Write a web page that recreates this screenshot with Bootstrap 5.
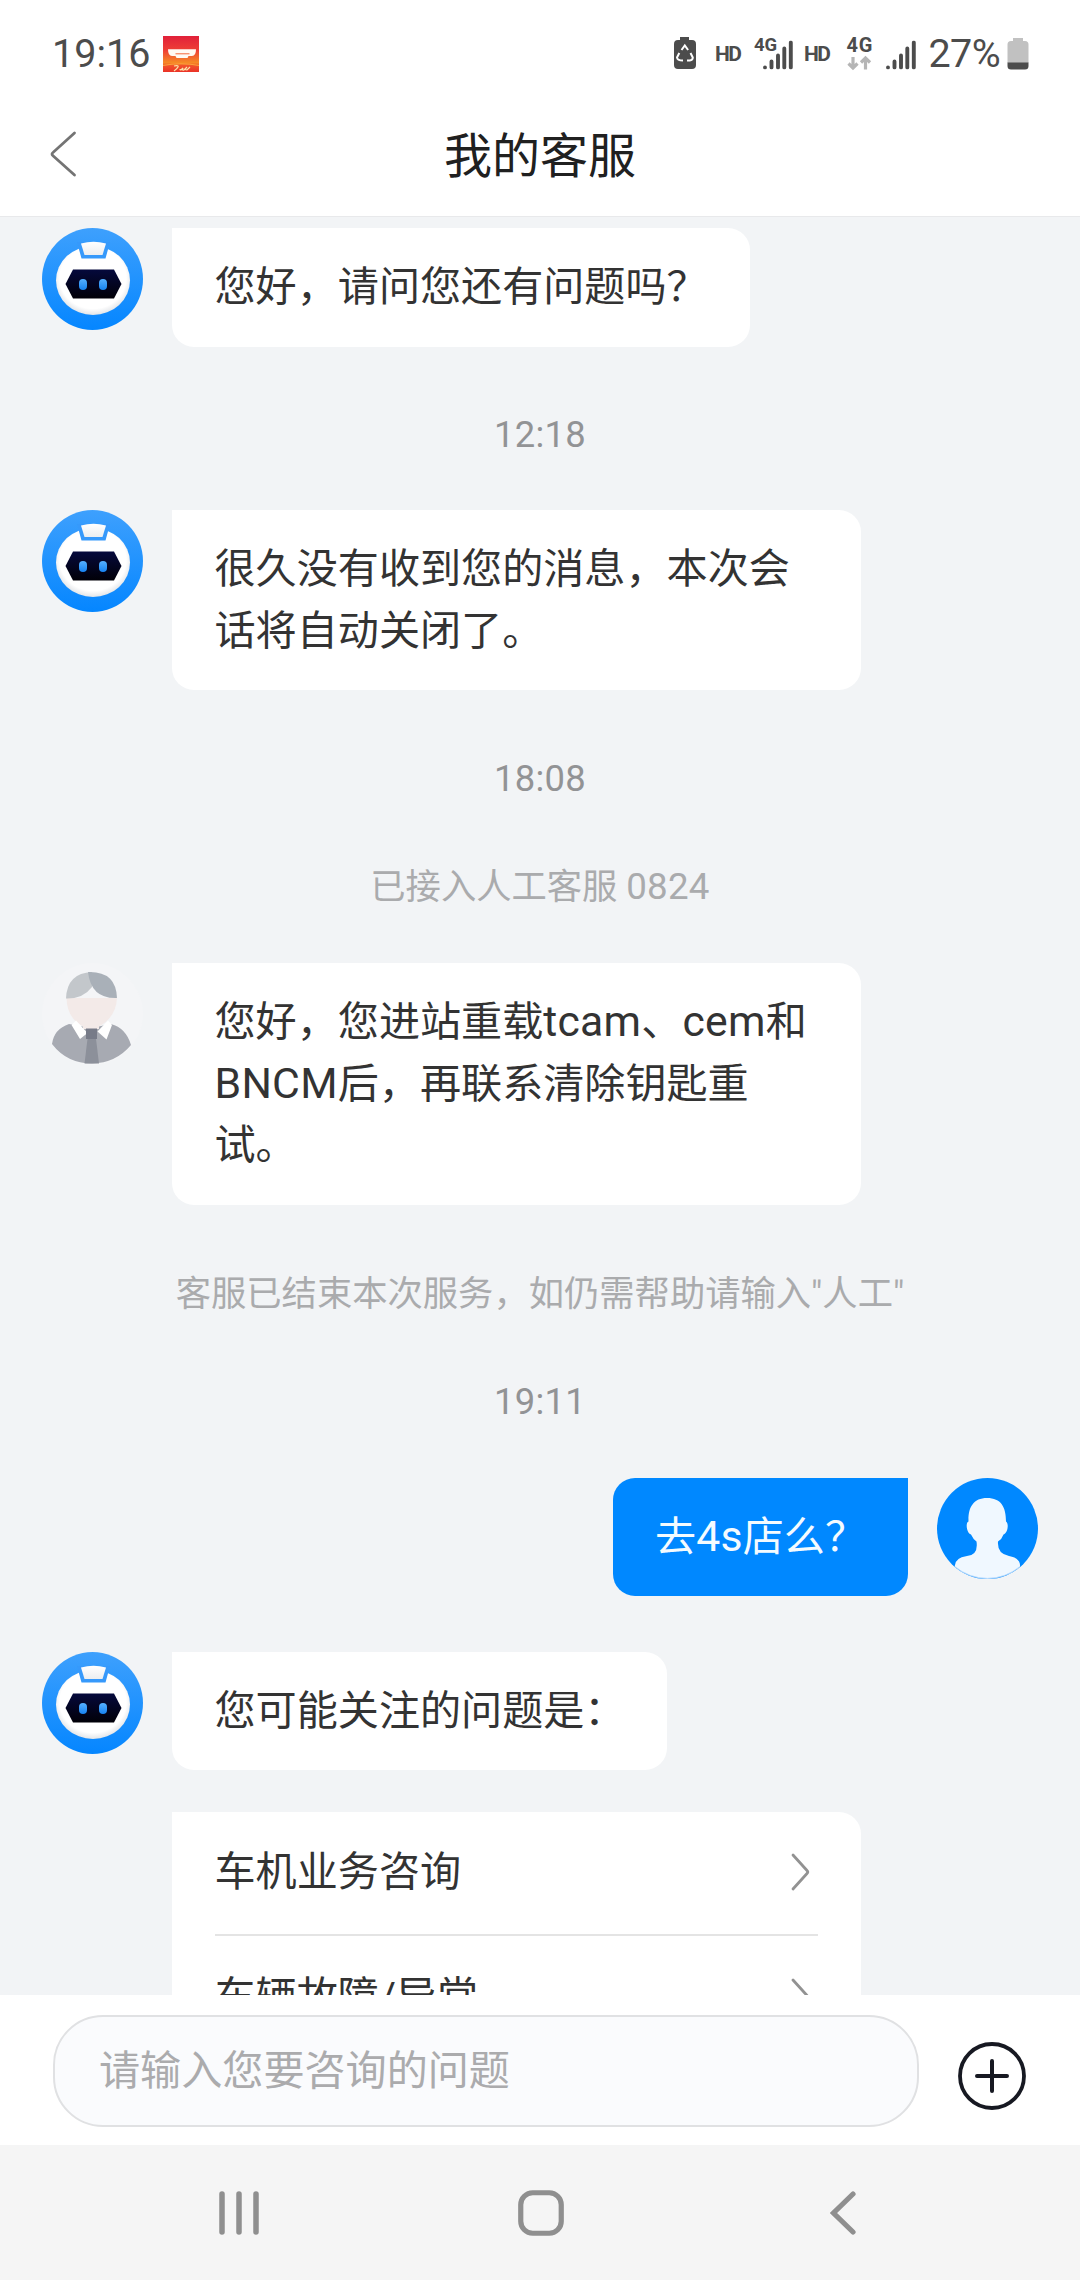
<!DOCTYPE html>
<html lang="zh-CN">
<head>
<meta charset="utf-8">
<meta name="viewport" content="width=device-width, initial-scale=1">
<title>我的客服</title>
<link href="https://cdn.jsdelivr.net/npm/bootstrap@5.3.0/dist/css/bootstrap.min.css" rel="stylesheet">
<style>
html,body{height:100%}
body{font-family:Roboto,"Noto Sans CJK SC",sans-serif;color:#333;background:#f2f4f6;overflow:hidden}
svg{display:block;flex:none}
.phone{width:1080px;height:2280px}
.status{height:108px;padding:0 51px 0 52px;color:#4c4c4c;font-size:39.5px;line-height:46px}
.status svg{overflow:visible}
.status svg text{font-weight:700;fill:#4c4c4c}
.poster{margin-left:13px}
.percent{letter-spacing:-.6px}
.battery{margin-left:7px}
.titlebar{height:108px;padding:0 50px 16px}
.titlebar h1{font-size:48px;line-height:72px;color:#202020;font-weight:400;padding-top:5px}
.ghost{width:27px}
.chat{border-top:1px solid #e8e9eb;padding:11px 42px 0;min-height:0}
.msg{gap:29px}
.bubble{background:#fff;border-radius:0 22px 22px 22px;padding:29px 42px 28px 42.5px;font-size:41.1px;line-height:61.5px;max-width:689px}
.bubble.full{width:689px}
.bubble.mine{background:#08f;color:#f4fbff;border-radius:22px 0 22px 22px;padding-bottom:27.5px}
.latin{font-size:1.04em;letter-spacing:.25px;line-height:1}
.note{font-size:35.3px;line-height:52px;color:#aaabad}
.stamp{font-size:36.4px;line-height:52px;color:#929395;letter-spacing:.3px}
.topics{width:689px;margin-left:130px;margin-top:42px;background:#fff;border-radius:0 22px 22px 22px;padding:0 43px 0 42.5px;font-size:41.1px;line-height:61.5px}
.topic{height:124px;border-bottom:2px solid #e4e4e4}
.topic:last-child{border:0}
.topic svg{margin-right:7px;margin-top:-2px}
.composer{height:150px;padding:20px 53px 18px}
.ask{width:868px;height:112px;border:2px solid #e0e1e3;border-radius:50px;background:#fafbfd;padding:0 0 1px 44px;font-size:41.1px;color:#aaa;box-shadow:none}
.ask::placeholder{color:#ababad;opacity:1}
.plus{margin:26px 0 0 38px}
.keys{height:135px;background:#f5f5f5;padding:0 224px 0 219px}
.home-key{margin-left:-8px}
.mt-a{margin-top:62px}.mt-b{margin-top:49.5px}.mt-c{margin-top:63px}.mt-d{margin-top:56px}.mt-e{margin-top:50px}
</style>
</head>
<body>
<svg width="0" height="0" class="position-absolute" aria-hidden="true">
  <defs>
    <linearGradient id="sky" x1="0" y1="0" x2="0" y2="1"><stop offset="0" stop-color="#3ea0fd"/><stop offset="1" stop-color="#0586ff"/></linearGradient>
    <linearGradient id="visor" x1="0" y1="0" x2="0" y2="1"><stop offset="0" stop-color="#05093c"/><stop offset="1" stop-color="#010007"/></linearGradient>
    <linearGradient id="cap" x1="0" y1="0" x2="0" y2="1"><stop offset="0" stop-color="#fff"/><stop offset="1" stop-color="#eceef0"/></linearGradient>
    <radialGradient id="shell" cx=".5" cy=".46" r=".56"><stop offset=".8" stop-color="#fff"/><stop offset="1" stop-color="#dcdfe3"/></radialGradient>
    <linearGradient id="eye" x1="0" y1="0" x2="0" y2="1"><stop offset="0" stop-color="#55b0ff"/><stop offset="1" stop-color="#1783f2"/></linearGradient>
    <linearGradient id="poster" x1="0" y1="0" x2="0" y2="1"><stop offset="0" stop-color="#e1203a"/><stop offset=".4" stop-color="#ee3f35"/><stop offset=".74" stop-color="#f68a25"/><stop offset=".82" stop-color="#f2532a"/><stop offset="1" stop-color="#ea3228"/></linearGradient>
    <symbol id="robot" viewBox="0 0 101 102">
      <ellipse cx="50.5" cy="51" rx="50.5" ry="51" fill="url(#sky)"/>
      <ellipse cx="51" cy="52.500" rx="37" ry="34.500" fill="url(#shell)"/>
      <path d="M35 14h33l-4.500 16.500h-24z" fill="#3699fb"/>
      <path d="M39 15.500q12.500-3.500 25 0l-3.500 11.500h-18z" fill="url(#cap)"/>
      <path d="M31 41.500h41l7.500 14.500-7.500 14.500h-41l-7.500-14.500z" fill="url(#visor)"/>
      <rect x="37" y="51" width="8" height="11" rx="4" fill="url(#eye)"/><rect x="57" y="51" width="8" height="11" rx="4" fill="url(#eye)"/>
    </symbol>
    <symbol id="bars" viewBox="0 0 30 29">
      <g stroke="#4c4c4c" stroke-width="3.900" stroke-linecap="round"><path d="M2 27v0M8.500 21v6M15 15v12M21.300 8v19M27.800 2v25"/></g>
    </symbol>
    <symbol id="more" viewBox="0 0 20 38"><path d="M2 2l14 15.500q1.500 1.500 0 3L2 36" fill="none" stroke="#929292" stroke-width="2.800" stroke-linecap="round"/></symbol>
  </defs>
</svg>
<div class="phone d-flex flex-column">
  <header class="bg-white">
    <div class="status d-flex align-items-center">
      <span>19:16</span>
      <svg class="poster" width="36" height="36" viewBox="0 0 36 36">
        <rect width="36" height="36" fill="url(#poster)"/>
        <path d="M5 13.200h28q0 6.500-4 6.800h-3.500l-1 2H13.500l-1-2H9q-4-.3-4-6.800z" fill="#fffaf2"/><path d="M12.500 17.800h14" stroke="#f5693a" stroke-width="1"/>
        <path d="M0 29.500Q18 26 36 29.500" fill="none" stroke="#fba43a" stroke-width="1"/>
        <path d="M11 30q5-1 4 1t-4 4M17 33q0 2 2 0l1-1q-1 3 1 2l2-2M24 31q-3 3 0 3l3-3" fill="none" stroke="#fbe3a8" stroke-width="1.200"/>
      </svg>
      <svg class="ms-auto" width="255" height="36" viewBox="0 0 255 36">
        <path d="M7 1h9v3h3q4 0 4 4v21q0 4-4 4H5q-4 0-4-4V8q0-4 4-4h2z" fill="#4c4c4c"/>
        <path d="M8.500 14l3.300-4.500 3.300 4.500M17.500 17l2.300 4.500q0 2.700-3 3H14M6.300 17l-2.300 4.500q.3 3 6 3" fill="none" stroke="#fff" stroke-width="2"/>
        <text x="42" y="24.500" font-size="21" textLength="27">HD</text>
        <text x="81" y="14.500" font-size="18.500" textLength="23">4G</text>
        <use href="#bars" x="90" y="4.500" width="30" height="29"/>
        <text x="131" y="24.500" font-size="21" textLength="27">HD</text>
        <text x="173.500" y="15.500" font-size="20" textLength="26">4G</text>
        <path d="M180 21v11M175.500 27.500l4.500 4.500 4.500-4.500M192.500 33.500V23M188 26.500l4.500-4.500 4.500 4.500" fill="none" stroke="#b5b5b5" stroke-width="3.200"/>
        <use href="#bars" x="213" y="4.500" width="30" height="29"/>
      </svg>
      <span class="percent">27%</span>
      <svg class="battery" width="22" height="32" viewBox="0 0 22 32"><path d="M6 0h10v3h2q3.500 0 3.500 3.500V25H.5V6.500Q.5 3 4 3h2z" fill="#c1c1c1"/><path d="M.5 24.500h21V28q0 3.500-3.500 3.500H4Q.5 31.500.5 28z" fill="#4c4c4c"/></svg>
    </div>
    <div class="titlebar d-flex align-items-center justify-content-between">
      <svg width="27" height="46" viewBox="0 0 27 46"><path d="M24.500 2L3 21.500q-2 1.500 0 3.200L24.500 44" fill="none" stroke="#747474" stroke-width="2.800" stroke-linecap="round"/></svg>
      <h1 class="mb-0">我的客服</h1>
      <span class="ghost"></span>
    </div>
  </header>

  <main class="chat flex-fill overflow-hidden">
    <div class="msg d-flex align-items-start">
      <svg width="101" height="102"><use href="#robot"/></svg>
      <div class="bubble">您好，请问您还有问题吗？</div>
    </div>
    <div class="stamp text-center mt-a">12:18</div>
    <div class="msg d-flex align-items-start mt-b">
      <svg width="101" height="102"><use href="#robot"/></svg>
      <div class="bubble full">很久没有收到您的消息，本次会<br>话将自动关闭了。</div>
    </div>
    <div class="stamp text-center mt-c">18:08</div>
    <div class="note text-center mt-d">已接入人工客服 <span class="latin">0824</span></div>
    <div class="msg d-flex align-items-start mt-e">
      <svg width="101" height="102" viewBox="0 0 101 102">
        <ellipse cx="50.500" cy="51" rx="50.500" ry="51" fill="#f4f5f7"/>
        <path d="M27 61Q12 66 10 81Q25 100.500 50 100.500Q74 100 89 82Q84 65 69 61L49 65z" fill="#a7aab2"/>
        <path d="M41 57l8 10 9-10z" fill="#f3eae8"/>
        <path d="M24.500 35Q25 55 41 63.500V66h16v-2.500Q74 54 75 35z" fill="#f3eae8"/>
        <path d="M24 35.500Q25 10 50 9v15Q41 36 24 35.500z" fill="#c3c7cb"/>
        <path d="M46 9Q74 8 75 35Q49 36 46 9z" fill="#a9b0b8"/>
        <path d="M34 57.500L29.500 62l8.500 14 7.500-6zM66 57.500l4 4.500-5.500 14.500-9-8z" fill="#fff"/>
        <path d="M44 65.500h11V76H44z" fill="#777b88"/><path d="M45.500 76h8.500l3 24.500H42.500z" fill="#8c909a"/>
      </svg>
      <div class="bubble full">您好，您进站重载<span class="latin">tcam</span>、<span class="latin">cem</span>和<br><span class="latin">BNCM</span>后，再联系清除钥匙重<br>试。</div>
    </div>
    <div class="note text-center mt-c">客服已结束本次服务，如仍需帮助请输入"人工"</div>
    <div class="stamp text-center mt-d">19:11</div>
    <div class="msg d-flex align-items-start justify-content-end mt-e">
      <div class="bubble mine">去<span class="latin">4s</span>店么？</div>
      <svg width="101" height="102" viewBox="0 0 101 102">
        <ellipse cx="50.500" cy="50.500" rx="50.500" ry="50.500" fill="#08f"/>
        <path d="M50 20C36 20 31 30 31.500 43.500C28 45 30 56 34 56.500Q36 61 39.500 63.500Q41.500 77 30 78Q17 80 17.800 89A50.500 50.500 0 0 0 83 89Q84 80 72 78Q60 76 61 63.500Q65 61 66.500 56.500C71 55 72 45 69 43.500C69 29 64 20 50 20z" fill="#f0f8ff"/>
        <path d="M17.800 88.500A50.300 50 0 0 0 83 88.500" fill="none" stroke="#8cc5fb" stroke-width=".6"/>
      </svg>
    </div>
    <div class="msg d-flex align-items-start mt-d">
      <svg width="101" height="102"><use href="#robot"/></svg>
      <div class="bubble">您可能关注的问题是：</div>
    </div>
    <div class="topics">
      <div class="topic d-flex align-items-center justify-content-between"><span>车机业务咨询</span><svg width="20" height="38"><use href="#more"/></svg></div>
      <div class="topic d-flex align-items-center justify-content-between"><span>车辆故障/异常</span><svg width="20" height="38"><use href="#more"/></svg></div>
    </div>
  </main>

  <footer>
    <div class="composer bg-white d-flex">
      <input class="form-control ask" type="text" placeholder="请输入您要咨询的问题">
      <svg class="plus" width="70" height="70" viewBox="0 0 70 70"><circle cx="35" cy="35" r="32" fill="none" stroke="#171922" stroke-width="3.800"/><path d="M35 20v30M20 35h30" stroke="#171922" stroke-width="4" stroke-linecap="round"/></svg>
    </div>
    <div class="keys d-flex align-items-center justify-content-between">
      <svg width="40" height="44" viewBox="0 0 40 44"><path d="M3 3v38M20 3v38M37 3v38" stroke="#8f8f8f" stroke-width="5.500" stroke-linecap="round"/></svg>
      <svg class="home-key" width="46" height="46" viewBox="0 0 46 46"><rect x="2.750" y="2.750" width="40.500" height="40.500" rx="12" fill="none" stroke="#8f8f8f" stroke-width="5.200"/></svg>
      <svg width="26" height="44" viewBox="0 0 26 44"><path d="M23 3L3.500 22L23 41" fill="none" stroke="#8f8f8f" stroke-width="5.200" stroke-linecap="round"/></svg>
    </div>
  </footer>
</div>
<script src="https://cdn.jsdelivr.net/npm/bootstrap@5.3.0/dist/js/bootstrap.bundle.min.js"></script>
</body>
</html>
